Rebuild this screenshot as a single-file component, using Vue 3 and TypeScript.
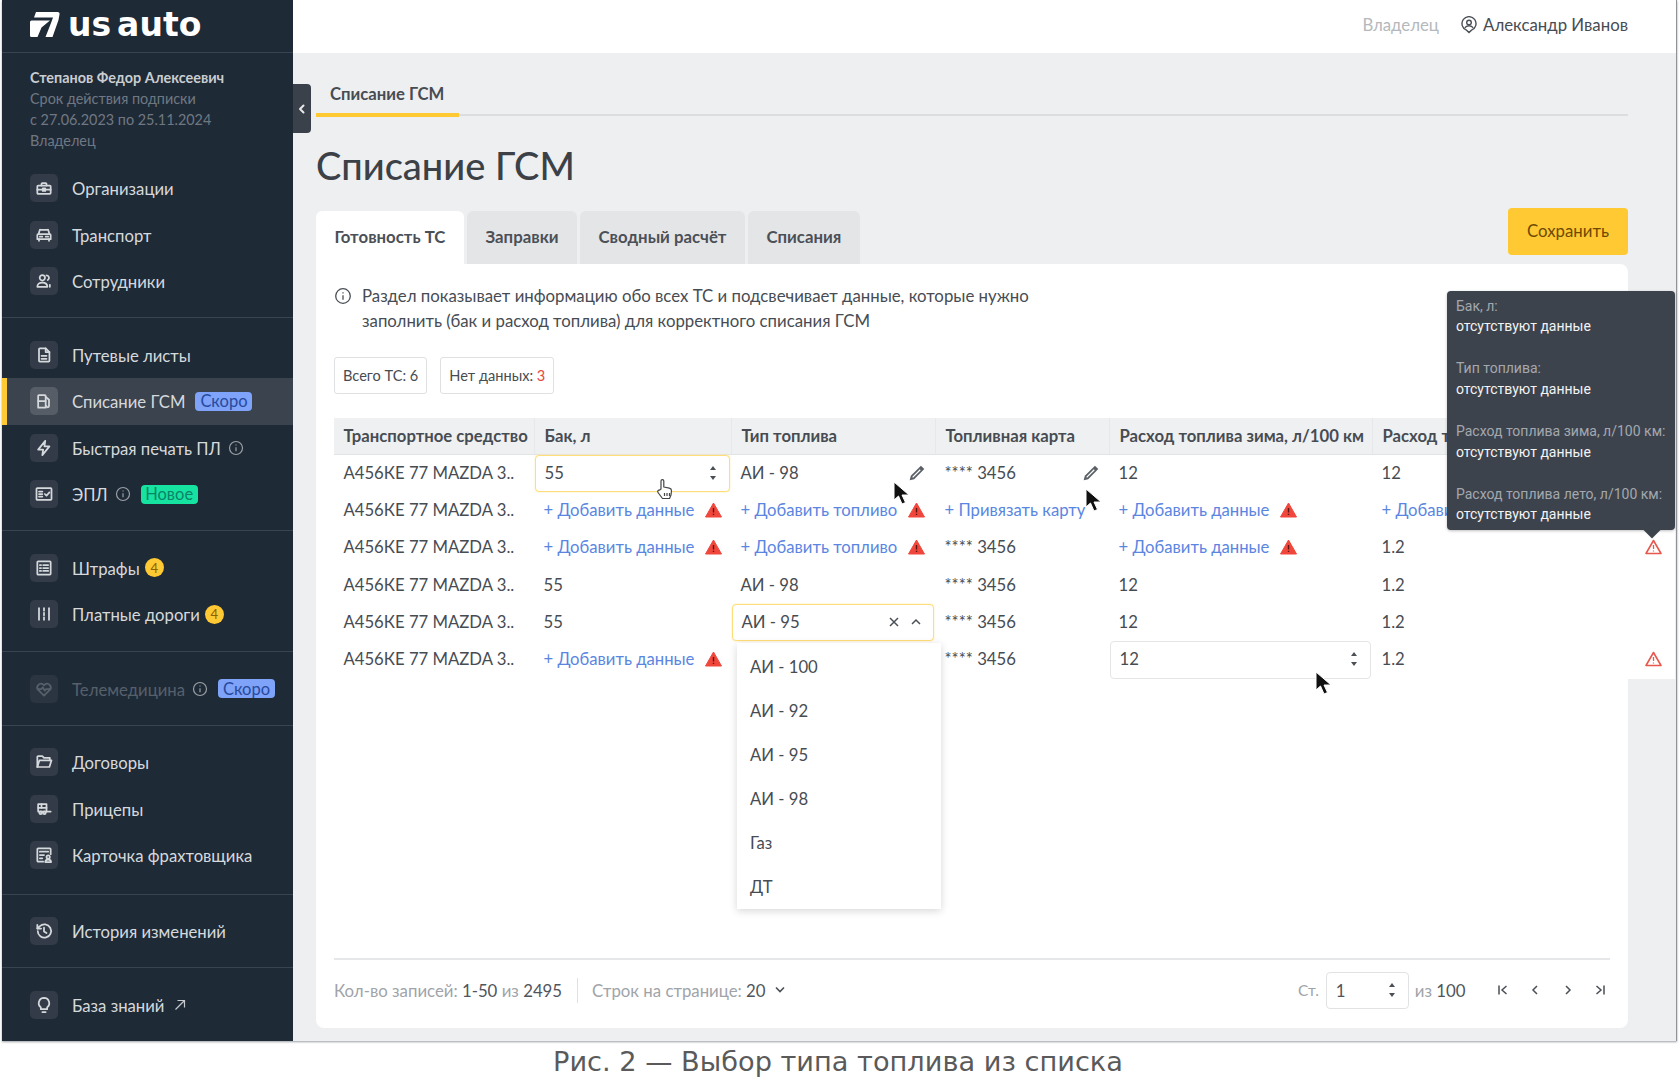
<script setup lang="ts">
interface NavItem {
  label: string
  icon: string[]
  info?: boolean
  badge?: 'soon' | 'new'
  count?: number
  active?: boolean
  dim?: boolean
  ext?: boolean
}

interface Cell {
  kind: 'text' | 'link' | 'number' | 'select'
  value: string
  warn?: boolean
  edit?: boolean
  focus?: boolean
}

const groups: NavItem[][] = [
  [
    { label: 'Организации', icon: ['M5 9h14a1 1 0 0 1 1 1v8a1 1 0 0 1-1 1H5a1 1 0 0 1-1-1v-8a1 1 0 0 1 1-1z', 'M9 9V7a1 1 0 0 1 1-1h4a1 1 0 0 1 1 1v2', 'M4 14h16', 'M10.5 12.5h3v3h-3z'] },
    { label: 'Транспорт', icon: ['M5.5 11l1.2-4.5a1 1 0 0 1 1-.8h8.6a1 1 0 0 1 1 .8l1.2 4.5', 'M5 11h14a1 1 0 0 1 1 1v5H4v-5a1 1 0 0 1 1-1z', 'M6 17v2', 'M18 17v2', 'M7 14h3', 'M14 14h3'] },
    { label: 'Сотрудники', icon: ['M10 5a3.2 3.2 0 1 1 0 6.4A3.2 3.2 0 0 1 10 5z', 'M4 19c0-3.4 2.4-5 6-5s6 1.6 6 5z', 'M15 5.2a3 3 0 0 1 1.5 5.6', 'M19 16.5v2.5'] }
  ],
  [
    { label: 'Путевые листы', icon: ['M7 4h7l4.5 4.5V19a1 1 0 0 1-1 1H7a1 1 0 0 1-1-1V5a1 1 0 0 1 1-1z', 'M14 4v4.5h4.5', 'M9 13h6', 'M9 16.5h6'] },
    { label: 'Списание ГСМ', icon: ['M5 20V6a1 1 0 0 1 1-1h7a1 1 0 0 1 1 1v14z', 'M5 12h9', 'M14 7l4 3.5V18a1.5 1.5 0 0 1-3 0'], badge: 'soon', active: true },
    { label: 'Быстрая печать ПЛ', icon: ['M13.5 3.5L5 14h6l-1 6.5 8.5-10.5h-6z'], info: true },
    { label: 'ЭПЛ', icon: ['M4 5h16a1 1 0 0 1 1 1v12a1 1 0 0 1-1 1H4a1 1 0 0 1-1-1V6a1 1 0 0 1 1-1z', 'M6 9h4', 'M6 12h4', 'M6 15h4', 'M13 12l2 2 3.5-4'], info: true, badge: 'new' }
  ],
  [
    { label: 'Штрафы', icon: ['M5 4h14a1 1 0 0 1 1 1v14a1 1 0 0 1-1 1H5a1 1 0 0 1-1-1V5a1 1 0 0 1 1-1z', 'M7 8.5h1.5', 'M11 8.5h6', 'M7 12h1.5', 'M11 12h6', 'M7 15.5h1.5', 'M11 15.5h6'], count: 4 },
    { label: 'Платные дороги', icon: ['M6 5v14', 'M12 5v3', 'M12 10.5v3', 'M12 16v3', 'M18 5v14'], count: 4 }
  ],
  [
    { label: 'Телемедицина', icon: ['M12 20l-7-7a4.4 4.4 0 0 1 6.2-6.2l.8.8.8-.8A4.4 4.4 0 0 1 19 13z', 'M4 12h5l1.5-2 2.5 4 1.5-2H20'], info: true, badge: 'soon', dim: true }
  ],
  [
    { label: 'Договоры', icon: ['M4 18V6a1 1 0 0 1 1-1h5l2 2h7v3', 'M4 18l2.5-8H21l-2.5 8z'] },
    { label: 'Прицепы', icon: ['M5 6h10v9H5z', 'M5 10.5h10', 'M9 6v4.5', 'M15 15h5', 'M8 18a1.6 1.6 0 1 0 0-3.2A1.6 1.6 0 0 0 8 18z', 'M12.5 18a1.6 1.6 0 1 0 0-3.2 1.6 1.6 0 0 0 0 3.2z'] },
    { label: 'Карточка фрахтовщика', icon: ['M11 20H5a1 1 0 0 1-1-1V5a1 1 0 0 1 1-1h14a1 1 0 0 1 1 1v6', 'M7 8h10', 'M7 12h5', 'M7 16h3', 'M17 12.5a2 2 0 1 1 0 4 2 2 0 0 1 0-4z', 'M13.5 20.5c0-2 1.5-3 3.5-3s3.5 1 3.5 3z'] }
  ],
  [
    { label: 'История изменений', icon: ['M4.5 12a8 8 0 1 0 2.4-5.7L4 9', 'M4 4.5V9h4.5', 'M12 8v4.5l3 2'] }
  ],
  [
    { label: 'База знаний', icon: ['M12 3.5a6.3 6.3 0 0 0-3.8 11.3V17h7.6v-2.2A6.3 6.3 0 0 0 12 3.5z', 'M10 20.5h4'], ext: true }
  ]
]

const t = (value: string, extra: Partial<Cell> = {}): Cell => ({ kind: 'text', value, ...extra })
const add = (value: string): Cell => ({ kind: 'link', value, warn: true })
const car = t('А456КЕ 77 MAZDA 3..')
const card = t('**** 3456')

const columns = ['Транспортное средство', 'Бак, л', 'Тип топлива', 'Топливная карта', 'Расход топлива зима, л/100 км', 'Расход топлива лето, л/100 км', '']

const rows: { cells: Cell[]; alert?: boolean }[] = [
  { cells: [car, { kind: 'number', value: '55', focus: true }, t('АИ - 98', { edit: true }), t('**** 3456', { edit: true }), t('12'), t('12')] },
  { cells: [car, add('+ Добавить данные'), add('+ Добавить топливо'), { kind: 'link', value: '+ Привязать карту' }, add('+ Добавить данные'), add('+ Добавить данные')] },
  { cells: [car, add('+ Добавить данные'), add('+ Добавить топливо'), card, add('+ Добавить данные'), t('1.2')], alert: true },
  { cells: [car, t('55'), t('АИ - 98'), card, t('12'), t('1.2')] },
  { cells: [car, t('55'), { kind: 'select', value: 'АИ - 95', focus: true }, card, t('12'), t('1.2')] },
  { cells: [car, add('+ Добавить данные'), t(''), card, { kind: 'number', value: '12' }, t('1.2')], alert: true }
]

const fuelOptions = ['АИ - 100', 'АИ - 92', 'АИ - 95', 'АИ - 98', 'Газ', 'ДТ']

const tooltipItems = ['Бак, л:', 'Тип топлива:', 'Расход топлива зима, л/100 км:', 'Расход топлива лето, л/100 км:']

const tabs = ['Готовность ТС', 'Заправки', 'Сводный расчёт', 'Списания']

const pointers = [
  { x: 891, y: 481 },
  { x: 1083, y: 488 },
  { x: 1313, y: 671 }
]
</script>

<template>
  <div class="page">
    <div class="frame">
      <aside class="sidebar">
        <div class="logo">
          <svg class="logo-mark" width="30" height="27" viewBox="0 0 30 27">
            <path d="M6 1h21.500Q30 1 29.500 3.500L28.500 9l-6 17h-7L21 12l2-5.500H4z" fill="#fff" />
            <path d="M1.500 9.500H20l-8.500 7-4 9.500h-6Q0 26 0 24.500V11q0-1.500 1.500-1.500z" fill="#fff" />
          </svg>
          <span class="logo-text">us auto</span>
        </div>
        <div class="user">
          <div class="user-name">Степанов Федор Алексеевич</div>
          <div>Срок действия подписки</div>
          <div>с 27.06.2023 по 25.11.2024</div>
          <div>Владелец</div>
        </div>
        <div v-for="(group, gi) in groups" :key="gi" class="nav-group" :class="{ first: gi === 0 }">
          <div
            v-for="item in group"
            :key="item.label"
            class="nav-item"
            :class="{ active: item.active, dim: item.dim }"
          >
            <span class="nav-icon">
              <svg width="20" height="20" viewBox="0 0 24 24" fill="none" stroke="currentColor" stroke-width="2.1" stroke-linecap="round" stroke-linejoin="round">
                <path v-for="d in item.icon" :key="d" :d="d" />
              </svg>
            </span>
            <span class="nav-label">{{ item.label }}</span>
            <svg v-if="item.info" class="nav-info" width="16" height="16" viewBox="0 0 16 16" fill="none" stroke="currentColor" stroke-width="1.2">
              <circle cx="8" cy="8" r="6.5" />
              <path d="M8 7.200v4M8 4.600v1" />
            </svg>
            <span v-if="item.count" class="count">{{ item.count }}</span>
            <span v-if="item.badge === 'soon'" class="badge soon">Скоро</span>
            <span v-if="item.badge === 'new'" class="badge new">Новое</span>
            <svg v-if="item.ext" class="nav-ext" width="14" height="14" viewBox="0 0 14 14" fill="none" stroke="currentColor" stroke-width="1.200">
              <path d="M2.500 11.500l9-9M4.500 2.500h7v7" />
            </svg>
          </div>
        </div>
      </aside>

      <button class="collapse" type="button">
        <svg width="10" height="12" viewBox="0 0 10 12" fill="none" stroke="#e6e8ea" stroke-width="2" stroke-linecap="round" stroke-linejoin="round">
          <path d="M6.500 2.500L3 6l3.500 3.500" />
        </svg>
      </button>

      <div class="main">
        <header class="topbar">
          <span class="role">Владелец</span>
          <svg width="16" height="18" viewBox="0 0 16 18" fill="none" stroke="#4a4f56" stroke-width="1.400">
            <path d="M8 16.500l-2.500-2.300A7 7 0 1 1 10.500 14.200z" />
            <circle cx="8" cy="6.500" r="2.300" />
            <path d="M3.800 12c.8-1.500 2.300-2.200 4.200-2.200s3.400.7 4.200 2.200" />
          </svg>
          <span class="user-link">Александр Иванов</span>
        </header>

        <div class="content">
          <div class="crumbs"><span class="crumb">Списание ГСМ</span></div>
          <h1 class="title">Списание ГСМ</h1>

          <div class="tabbar">
            <span v-for="(tab, i) in tabs" :key="tab" class="tab" :class="{ current: i === 0 }">{{ tab }}</span>
            <button class="save" type="button">Сохранить</button>
          </div>

          <section class="card">
            <div class="note">
              <svg class="note-icon" width="18" height="18" viewBox="0 0 18 18" fill="none" stroke="#4a4f56" stroke-width="1.300">
                <circle cx="9" cy="9" r="7.300" />
                <path d="M9 8.200v4.600M9 5.200v1.200" />
              </svg>
              <p>Раздел показывает информацию обо всех ТС и подсвечивает данные, которые нужно<br />заполнить (бак и расход топлива) для корректного списания ГСМ</p>
            </div>

            <div class="chips">
              <span class="chip">Всего ТС: 6</span>
              <span class="chip">Нет данных: <b>3</b></span>
            </div>

            <div class="table">
              <div class="row head">
                <div v-for="(col, i) in columns" :key="i" class="cell">{{ col }}</div>
              </div>
              <div v-for="(row, ri) in rows" :key="ri" class="row">
                <div v-for="(cell, ci) in row.cells" :key="ci" class="cell">
                  <div v-if="cell.kind === 'number'" class="field" :class="{ focus: cell.focus }">
                    <span>{{ cell.value }}</span>
                    <svg width="10" height="18" viewBox="0 0 10 18" fill="#4a4f56"><path d="M5 2l3 4H2zM5 16l3-4H2z" /></svg>
                  </div>
                  <template v-else-if="cell.kind === 'select'">
                    <div class="field focus">
                      <span>{{ cell.value }}</span>
                      <span class="select-icons">
                        <svg width="12" height="12" viewBox="0 0 12 12" fill="none" stroke="#4a4f56" stroke-width="1.500"><path d="M2 2l8 8M10 2l-8 8" /></svg>
                        <svg width="12" height="12" viewBox="0 0 12 12" fill="none" stroke="#4a4f56" stroke-width="1.500"><path d="M2 8l4-4 4 4" /></svg>
                      </span>
                    </div>
                    <ul class="dropdown">
                      <li v-for="opt in fuelOptions" :key="opt">{{ opt }}</li>
                    </ul>
                  </template>
                  <template v-else-if="cell.kind === 'link'">
                    <span class="link">{{ cell.value }}</span>
                    <svg v-if="cell.warn" class="warn" width="17" height="16" viewBox="0 0 17 16">
                      <path d="M8.500 1L16.500 15H.500z" fill="#f0473c" stroke="#f0473c" stroke-linejoin="round" />
                      <path d="M8.500 6v4.500M8.500 11.800v1.200" stroke="#5c1410" stroke-width="1.400" />
                    </svg>
                  </template>
                  <template v-else>
                    <span>{{ cell.value }}</span>
                    <svg v-if="cell.edit" class="pencil" width="18" height="18" viewBox="0 0 16 16" fill="#5b6066">
                      <path d="M11.500 1.500l3 3L5.500 13.500 1.500 14.500l1-4z" />
                      <path d="M10.500 4.700l.8.800-6.800 6.800-.8-.8z" fill="#fff" />
                    </svg>
                  </template>
                </div>
                <div class="cell">
                  <svg v-if="row.alert" class="alert" width="17" height="16" viewBox="0 0 17 16" fill="none" stroke="#e8584e" stroke-width="1.600" stroke-linejoin="round">
                    <path d="M8.500 1.500L16 14.500H1z" />
                    <path d="M8.500 6v4M8.500 11.500v1" stroke-width="1.300" />
                  </svg>
                </div>
              </div>
            </div>

            <footer class="pager">
              <span class="muted">Кол-во записей: <em>1-50</em> из <em>2495</em></span>
              <span class="sep"></span>
              <span class="muted">Строк на странице: <em>20</em></span>
              <svg class="pager-chev" width="10" height="8" viewBox="0 0 10 8" fill="none" stroke="#4a4f56" stroke-width="1.600"><path d="M1 1.500l4 4 4-4" /></svg>
              <span class="pager-right">
                <span class="muted">Ст.</span>
                <span class="page-input">
                  <span>1</span>
                  <svg width="10" height="18" viewBox="0 0 10 18" fill="#4a4f56"><path d="M5 2l3 4H2zM5 16l3-4H2z" /></svg>
                </span>
                <span class="muted">из <em>100</em></span>
                <span class="pager-nav">
                  <svg width="12" height="12" viewBox="0 0 12 12" fill="none" stroke="#4a4f56" stroke-width="1.500"><path d="M2 1.500v9M9.500 2L5 6l4.500 4" /></svg>
                  <svg width="12" height="12" viewBox="0 0 12 12" fill="none" stroke="#4a4f56" stroke-width="1.500"><path d="M8 2L4 6l4 4" /></svg>
                  <svg width="12" height="12" viewBox="0 0 12 12" fill="none" stroke="#4a4f56" stroke-width="1.500"><path d="M4 2l4 4-4 4" /></svg>
                  <svg width="12" height="12" viewBox="0 0 12 12" fill="none" stroke="#4a4f56" stroke-width="1.500"><path d="M10 1.500v9M2.500 2L7 6l-4.500 4" /></svg>
                </span>
              </span>
            </footer>
          </section>
        </div>
      </div>

      <div class="tooltip">
        <p v-for="item in tooltipItems" :key="item">
          <span>{{ item }}</span>
          <strong>отсутствуют данные</strong>
        </p>
      </div>

      <svg v-for="p in pointers" :key="p.x" class="pointer" :style="{ left: p.x + 'px', top: p.y + 'px' }" width="18" height="24" viewBox="0 0 18 24">
        <path d="M1 1v18l4.500-4 3.500 8 3.500-1.500-3.500-7.500H16z" fill="#111" stroke="#fff" stroke-width="1" />
      </svg>

      <svg class="hand" width="18" height="22" viewBox="0 0 18 22" fill="#fff" stroke="#444" stroke-width="1.200" stroke-linejoin="round">
        <path d="M5 11V3a1.400 1.400 0 0 1 2.800 0v6l5.500 1.200c1.400.3 2.200 1.200 2.200 2.500l-.5 4.300-1.500 3.500H6.500L2 14.500c-.8-1 0-2.500 1.300-2.300z" />
        <path d="M8.500 15v3M11 15v3M13.500 15v3" />
      </svg>
    </div>
    <div class="caption">Рис. 2 — Выбор типа топлива из списка</div>
  </div>
</template>

<style>
html,
body {
  margin: 0;
  background: #fff;
}
</style>

<style scoped>
.page {
  width: 1680px;
  height: 1090px;
  overflow: hidden;
  font-family: Lato, 'Noto Sans', sans-serif;
  color: #474c53;
  background: #fff;
}

.frame {
  position: relative;
  display: flex;
  width: 1675px;
  height: 1041px;
  margin-left: 2px;
  overflow: hidden;
  border-right: 1px solid #8f9398;
  box-shadow: 0 1px 2px #9a9ea6;
  box-sizing: border-box;
}

.caption {
  margin-top: 5px;
  padding-right: 4px;
  text-align: center;
  font-family: 'DejaVu Sans', sans-serif;
  font-size: 27.200px;
  line-height: 32px;
  color: #5a5a5a;
}

.sidebar {
  flex: 0 0 291px;
  background: #1f2a37;
  color: #d6d9dc;
}

.logo {
  display: flex;
  align-items: center;
  height: 53px;
  padding: 0 0 3px 28px;
  gap: 8px;
  border-bottom: 1px solid #3a4450;
  box-sizing: border-box;
}

.logo-text {
  font-family: 'DejaVu Sans', sans-serif;
  font-weight: 700;
  font-size: 33px;
  line-height: 1;
  word-spacing: -5.500px;
  color: #fff;
}

.user {
  padding: 15px 0 0 28px;
  height: 82px;
  font-size: 14.400px;
  line-height: 20.900px;
  color: #6f7882;
  box-sizing: content-box;
}

.user-name {
  font-weight: 700;
  color: #c9cdd1;
}

.nav-group {
  padding: 13.5px 0 12.5px;
  border-bottom: 1px solid #3a4450;
}

.nav-group.first {
  padding-top: 15px;
  padding-bottom: 12.500px;
}

.nav-group:nth-child(5) {
  padding-bottom: 13.500px;
}

.nav-group:nth-child(7) {
  padding-bottom: 15px;
}

.nav-group:last-child {
  border-bottom: 0;
}

.nav-item {
  display: flex;
  align-items: center;
  height: 46.5px;
  padding-left: 28px;
  font-size: 16.700px;
}

.nav-item.active {
  padding-left: 23px;
  background: #3b434e;
  border-left: 5px solid #ffc933;
}

.nav-icon {
  display: flex;
  flex: 0 0 28px;
  align-items: center;
  justify-content: center;
  width: 28px;
  height: 28px;
  margin-right: 14px;
  border-radius: 5px;
  background: #323b47;
}

.active .nav-icon {
  background: #565d67;
}

.dim .nav-icon {
  color: #56606b;
  background: #2b3541;
}

.nav-label {
  padding-top: 2px;
  white-space: nowrap;
}

.dim .nav-label {
  color: #56606b;
}

.nav-info {
  margin-left: 7px;
  color: #9aa0a7;
}

.nav-ext {
  margin-left: 9px;
  color: #c6cacf;
}

.count {
  display: flex;
  align-items: center;
  justify-content: center;
  width: 19px;
  height: 19px;
  margin-left: 5px;
  border-radius: 50%;
  background: #ffc933;
  color: #8a6100;
  font-size: 13px;
}

.badge {
  display: flex;
  align-items: center;
  justify-content: center;
  height: 19px;
  width: 57px;
  margin-left: 10px;
  border-radius: 4px;
  font-size: 16.500px;
}

.soon {
  background: #7ea3f8;
  color: #274a9e;
}

.new {
  background: #17e3a1;
  color: #0b8467;
}

.collapse {
  position: absolute;
  left: 291px;
  top: 84px;
  display: flex;
  align-items: center;
  justify-content: center;
  width: 18px;
  height: 49px;
  padding: 0;
  border: 0;
  border-radius: 0 4px 4px 0;
  background: #3b414b;
}

.main {
  display: flex;
  flex: 1;
  flex-direction: column;
  min-width: 0;
  background: #eeeff0;
}

.topbar {
  display: flex;
  align-items: center;
  justify-content: flex-end;
  flex: 0 0 53px;
  padding: 0 48px 4px 0;
  box-sizing: border-box;
  background: #fff;
  font-size: 16.800px;
}

.role {
  margin-right: 22px;
  color: #b5b8bc;
}

.user-link {
  margin-left: 6px;
}

.content {
  display: flex;
  flex: 1;
  flex-direction: column;
  min-height: 0;
  padding: 0 48px 13px 23px;
}

.crumbs {
  height: 61px;
  border-bottom: 2px solid #dcdddf;
}

.crumb {
  display: inline-block;
  height: 60px;
  padding: 0 15px 0 14px;
  line-height: 82px;
  font-size: 16.700px;
  font-weight: 700;
  border-bottom: 4px solid #ffc933;
  box-sizing: content-box;
}

.title {
  margin: 27px 0 0;
  font-size: 38px;
  font-weight: 500;
  line-height: 44px;
  color: #3c4148;
}

.tabbar {
  display: flex;
  align-items: flex-end;
  gap: 3px;
  height: 53px;
  margin-top: 24px;
}

.tab {
  display: flex;
  align-items: center;
  height: 53px;
  padding: 0 18.500px 2px;
  border-radius: 6px 6px 0 0;
  background: #e4e5e6;
  font-size: 16.800px;
  font-weight: 700;
  color: #4b5057;
  white-space: nowrap;
  box-sizing: border-box;
}

.tab.current {
  background: #fff;
}

.save {
  width: 120px;
  height: 47px;
  margin: 0 0 9px auto;
  padding: 0 0 2px;
  border: 0;
  border-radius: 4px;
  background: #ffc933;
  font: 16.800px Lato, sans-serif;
  color: #6e4a00;
}

.card {
  display: flex;
  flex: 1;
  flex-direction: column;
  min-height: 0;
  padding: 19px 18px 0;
  border-radius: 0 8px 8px 8px;
  background: #fff;
}

.note {
  display: flex;
  gap: 10px;
  height: 50px;
}

.note-icon {
  margin-top: 4px;
  margin-left: 0;
}

.note p {
  margin: 0;
  font-size: 16.800px;
  line-height: 25px;
}

.chips {
  display: flex;
  gap: 13px;
  margin-top: 24px;
}

.chip {
  display: flex;
  align-items: center;
  height: 37px;
  padding: 0 8px;
  border: 1px solid #dfe0e2;
  border-radius: 3px;
  box-sizing: border-box;
  font-size: 14.600px;
  white-space: pre;
}

.chip b {
  font-weight: 400;
  color: #e8483d;
}

.table {
  width: 1341px;
  margin-top: 24px;
}

.row {
  display: grid;
  grid-template-columns: 200px 197px 204px 174px 263px 258px 45px;
  height: 37.300px;
  background: #fff;
  font-size: 16.700px;
}

.head {
  height: 36px;
  background: #eff0f1;
  font-weight: 700;
  border-bottom: 1px solid #e2e3e4;
  box-sizing: content-box;
}

.head .cell {
  padding-bottom: 0;
  border-left: 1px solid #e7e8e9;
  white-space: nowrap;
}

.head .cell:first-child {
  border-left: 0;
}

.cell {
  position: relative;
  display: flex;
  align-items: center;
  min-width: 0;
  padding: 0 0 2px 9.5px;
  white-space: nowrap;
}

.link {
  color: #5a86e2;
}

.warn {
  flex: none;
  margin-left: 11px;
}

.pencil {
  position: absolute;
  right: 9px;
}

.alert {
  position: absolute;
  left: 15px;
}

.field {
  position: absolute;
  inset: 0 1px 0 1px;
  display: flex;
  align-items: center;
  justify-content: space-between;
  padding: 0 11px 2px 8.500px;
  border: 1px solid #e4e5e7;
  border-radius: 4px;
  background: #fff;
  box-sizing: border-box;
}

.field.focus {
  border-color: #ffdd7a;
  box-shadow: 0 0 2px #ffe9a8;
}

.select-icons {
  display: flex;
  gap: 10px;
}

.dropdown {
  position: absolute;
  left: 6px;
  top: 39px;
  z-index: 2;
  width: 204px;
  margin: 0;
  padding: 2px 0 0;
  list-style: none;
  background: #fff;
  box-shadow: 0 2px 8px rgba(0, 0, 0, 0.16);
}

.dropdown li {
  height: 44px;
  padding-left: 13px;
  line-height: 44px;
}

.pager {
  display: flex;
  align-items: center;
  height: 70px;
  margin-top: auto;
  padding-bottom: 8px;
  border-top: 2px solid #e6e7e8;
  box-sizing: border-box;
  font-size: 16.800px;
}

.muted {
  color: #a0a4a9;
}

.muted em {
  font-style: normal;
  color: #50555c;
}

.sep {
  width: 1px;
  height: 25px;
  margin: 0 14px 0 15px;
  background: #dfe0e2;
}

.pager-chev {
  margin-left: 9px;
}

.pager-right {
  display: flex;
  align-items: center;
  margin-left: auto;
}

.page-input {
  display: flex;
  align-items: center;
  justify-content: space-between;
  width: 83px;
  height: 37px;
  margin: 0 6px 0 7px;
  padding: 0 11px 0 9px;
  border: 1px solid #e1e2e4;
  border-radius: 4px;
  box-sizing: border-box;
  color: #50555c;
}

.pager-right > .muted:first-child {
  font-size: 15.500px;
}

.pager-nav {
  display: flex;
  gap: 20.500px;
  margin-left: 31px;
  margin-right: 4px;
}

.tooltip {
  position: absolute;
  left: 1445px;
  top: 291px;
  z-index: 3;
  width: 228px;
  height: 239px;
  padding: 4.500px 9px 0;
  border-radius: 4px;
  background: #3d434d;
  box-sizing: border-box;
  box-shadow: 0 1px 3px rgba(0, 0, 0, 0.25);
  font-family: Roboto, sans-serif;
  font-size: 14px;
  line-height: 20.700px;
}

.tooltip::after {
  content: '';
  position: absolute;
  left: 199px;
  bottom: -6px;
  width: 12px;
  height: 12px;
  background: #3d434d;
  transform: rotate(45deg);
}

.tooltip p {
  margin: 0 0 21.300px;
  white-space: nowrap;
}

.tooltip span {
  display: block;
  color: #a4a8ae;
}

.tooltip strong {
  display: block;
  font-weight: 400;
  color: #f2f3f4;
}

.pointer {
  position: absolute;
  z-index: 4;
}

.hand {
  position: absolute;
  left: 654px;
  top: 478px;
  z-index: 4;
}
</style>
